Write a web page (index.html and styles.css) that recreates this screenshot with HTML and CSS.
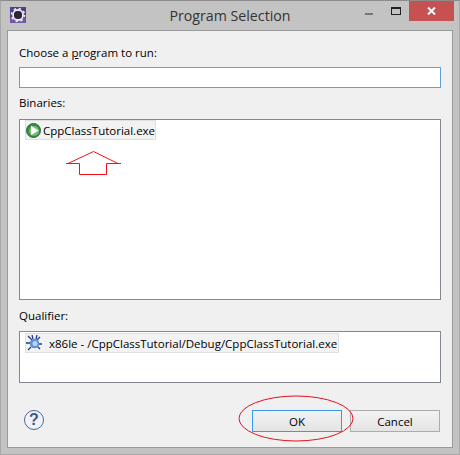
FILE: index.html
```html
<!DOCTYPE html>
<html>
<head>
<meta charset="utf-8">
<title>Program Selection</title>
<link rel="stylesheet" href="styles.css">
</head>
<body>
<div class="window">
  <header class="titlebar">
    <svg class="app-icon" width="16" height="16" viewBox="0 0 16 16">
      <rect width="16" height="16" fill="#54408a"/>
      <path d="M0 11h16v5H0z" fill="#7358a8"/>
      <circle cx="8" cy="8" r="6.500" fill="none" stroke="#efedf2" stroke-width="1.600" stroke-dasharray="2.200 2.900"/>
      <circle cx="8" cy="8" r="5" fill="none" stroke="#efedf2" stroke-width="1.800"/>
      <circle cx="8" cy="8" r="4" fill="#2a2638"/>
    </svg>
    <div class="title">Program Selection</div>
    <div class="controls">
      <span class="min"></span>
      <span class="max"></span>
      <span class="close">
        <svg width="9" height="8" viewBox="0 0 9 8"><path d="M1 .5L8 7.500M8 .5L1 7.500" stroke="#fff" stroke-width="2" fill="none"/></svg>
      </span>
    </div>
  </header>
  <main class="panel">
    <label class="label first">Choose a <u>p</u>rogram to run:</label>
    <div class="input"></div>
    <label class="label">Binaries:</label>
    <div class="list binaries">
      <div class="item">
        <svg width="15" height="15" viewBox="0 0 15 15">
          <circle cx="7.500" cy="7.500" r="7" fill="#3a8a48" stroke="#2c6b4a"/>
          <circle cx="8" cy="8" r="5" fill="#78bc6c"/>
          <path d="M5 2.800L12.500 7.500L5 12.200z" fill="#fff"/>
        </svg>
        <span>CppClassTutorial.exe</span>
      </div>
    </div>
    <label class="label">Qualifier:</label>
    <div class="list qualifier">
      <div class="item">
        <svg width="16" height="16" viewBox="0 0 16 16">
          <path d="M2 1l4 4M14 2l-3 3M0 8h4M12 9h4M2 15l3-3M14 14l-3-3M6 0l1 4M11 0l-1 4" stroke="#1f3a8c" stroke-width="1.300" fill="none"/>
          <circle cx="8.500" cy="8.500" r="4.800" fill="#5f90d0"/>
          <circle cx="9" cy="8.500" r="2.500" fill="#bdd4ee"/>
        </svg>
        <span>x86le - /CppClassTutorial/Debug/CppClassTutorial.exe</span>
      </div>
    </div>
    <footer class="footer">
      <div class="help">?</div>
      <div class="buttons">
        <button class="btn default">OK</button>
        <button class="btn">Cancel</button>
      </div>
    </footer>
  </main>
  <svg class="arrow" width="58" height="26" viewBox="0 0 58 26">
    <path d="M1 12.500H14.500V23.500H41.500V12.500H56M3 12.500L28.500 .5L53 12.500" fill="none" stroke="#f5101c"/>
  </svg>
  <svg class="ring" width="118" height="48" viewBox="0 0 118 48">
    <ellipse cx="58" cy="23.500" rx="57" ry="22.500" fill="none" stroke="#e8101f"/>
  </svg>
</div>
</body>
</html>
```
FILE: styles.css
```css
* { box-sizing: border-box; }
html, body { margin: 0; padding: 0; }
body { width: 460px; height: 455px; overflow: hidden; background: #c3c3c3; }
.window {
  position: relative;
  width: 460px;
  height: 455px;
  background: #c3c3c3;
  border-top: 1px solid #8c8c8c;
  border-left: 1px solid #a8a8a8;
  border-right: 1px solid #a8a8a8;
  border-bottom: 1px solid #a8a8a8;
  font-family: "Open Sans", "Noto Sans", sans-serif;
  font-size: 11.5px;
  color: #000;
}
.titlebar { position: relative; height: 29px; display: flex; align-items: flex-start; }
.app-icon { margin: 6px 0 0 9px; }
.title {
  position: absolute;
  left: 0; right: 0; top: 5px;
  text-align: center;
  font-size: 14.2px;
  line-height: 20px;
  color: #333;
}
.controls { position: absolute; right: 5px; top: 0; display: flex; align-items: flex-start; }
.min { width: 8px; height: 2px; background: #777; margin: 12px 18px 0 0; }
.max { width: 10px; height: 8px; border: 1px solid #222; border-top-width: 2px; margin: 6px 8px 0 0; }
.close {
  width: 45px; height: 20px; background: #c75050;
  display: flex; align-items: center; justify-content: center;
}
.close svg { display: block; }
.panel {
  margin: 0 6px;
  height: 418px;
  background: #f0f0f0;
  border: 1px solid #9a9a9a;
  padding: 0 11px;
  display: flex;
  flex-direction: column;
}
.label { display: block; height: 16px; line-height: 16px; color: #000; }
.first { margin-top: 14px; }
.input {
  height: 21px; margin: 6px 0 7px;
  background: #fff; border: 1px solid #5e9fdc;
}
.list { background: #fff; border: 1px solid #828790; padding: 0 5px; }
.binaries { height: 181px; margin: 8px 0 8px; }
.qualifier { height: 52px; margin: 7px 0 0; padding-top: 1px; }
.item {
  display: flex; align-items: center; gap: 2px;
  height: 20px; width: fit-content;
  background: #f2f2f2; border: 1px solid #dfdfdf;
}
.item svg { flex: none; }
.qualifier .item { gap: 7px; width: 314px; white-space: nowrap; }
.footer { display: flex; justify-content: space-between; align-items: flex-start; margin-top: 27px; padding-left: 5px; }
.help {
  width: 20px; height: 20px; border-radius: 50%;
  border: 1px solid #4c6a96; background: #f0f2f5; color: #3a5a8a;
  font-family: "Liberation Sans", sans-serif; font-weight: bold; font-size: 16px;
  line-height: 18px; text-align: center;
}
.buttons { display: flex; gap: 8px; padding-right: 1px; }
.btn {
  width: 90px; height: 22px; padding: 0;
  font: inherit; color: #000;
  background: linear-gradient(#f2f2f2, #e4e4e4);
  border: 1px solid #acacac;
}
.default { border-color: #3c98ee; }
.arrow { position: absolute; left: 64px; top: 150px; }
.ring { position: absolute; left: 237px; top: 394px; }
```
